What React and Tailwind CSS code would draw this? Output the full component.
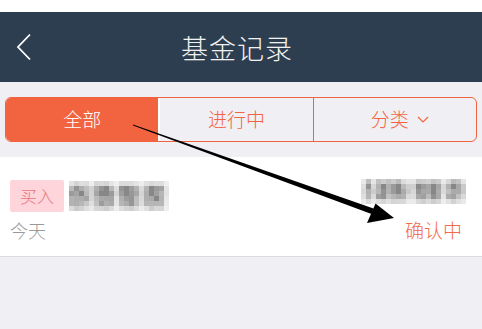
import React from 'react';

// censored-text mosaic: per column strength, per row strength
const nameCols = [0.55, 0.8, 0.75, 0.6, 0.25, 0.7, 0.85, 0.8, 0.6, 0.2, 0.65, 0.75, 0.85, 0.55, 0.2, 0.6, 0.8, 0.85, 0.6, 0.15];
const nameRows = [0.25, 0.85, 0.95, 0.8, 0.7, 0.3];
const amountCols = [0.2, 0.75, 0.3, 0.7, 0.8, 0.65, 0.75, 0.8, 0.55, 0.3, 0.25, 0.7, 0.8, 0.6, 0.75, 0.7, 0.2, 0.6, 0.8, 0.65, 0.3];
const amountRows = [0.45, 0.9, 0.85, 0.75, 0.3];

function noise(i, j) {
  const s = Math.sin(i * 12.9898 + j * 78.233) * 43758.5453;
  return s - Math.floor(s);
}

function Mosaic({ cols, rows, block = 5 }) {
  return (
    <svg width={cols.length * block} height={rows.length * block} className="block">
      {rows.map((rv, r) =>
        cols.map((cv, c) => {
          const v = Math.min(1, cv * rv * (0.75 + 0.55 * noise(r + 1, c + 3)) * 1.25);
          const g = Math.round(245 - 110 * v);
          return (
            <rect
              key={r + '-' + c}
              x={c * block}
              y={r * block}
              width={block}
              height={block}
              fill={`rgb(${g},${g},${g})`}
            />
          );
        })
      )}
    </svg>
  );
}

export default function App() {
  return (
    <div
      className="relative w-[482px] h-[329px] overflow-hidden bg-[#efeff4]"
      style={{ fontFamily: '"Noto Sans CJK SC", "Noto Sans", sans-serif' }}
    >
      <div className="h-[12px] bg-white" />

      {/* Header */}
      <div className="relative flex items-center justify-center h-[70px] bg-[#2d3e50]">
        <svg className="absolute left-[15px] top-[21px]" width="18" height="28" viewBox="0 0 18 28">
          <path d="M15 1.5 L3 14 L15 26.5" fill="none" stroke="#fff" strokeWidth="1.8" />
        </svg>
        <h1 className="text-[27px] font-light text-[#f2f2f2] tracking-[1px] -ml-[8px] leading-none">基金记录</h1>
      </div>

      {/* Tabs */}
      <div className="px-[5px] pt-[15px]">
        <div className="flex h-[45px] rounded-[6px] border border-[#f26440] overflow-hidden">
          <div className="flex-1 flex items-center justify-center bg-[#f26440] text-white text-[19px] font-light">
            全部
          </div>
          <div className="flex-1 flex items-center justify-center text-[#f26440] text-[19px] font-light border-r border-[#f26440] border-l-2 border-l-white">
            进行中
          </div>
          <div className="flex-1 flex items-center justify-center gap-[8px] text-[#f26440] text-[19px] font-light pl-[10px]">
            <span>分类</span>
            <svg width="12" height="8" viewBox="0 0 12 8">
              <path d="M1 1 L6 6 L11 1" fill="none" stroke="#f26440" strokeWidth="1.2" />
            </svg>
          </div>
        </div>
      </div>

      {/* Record card */}
      <div className="mt-[15px] bg-white border-b border-[#dcdce0] h-[100px] pl-[10px] pr-[16px] pt-[23px]">
        <div className="flex items-start justify-between">
          <div className="flex items-center gap-[5px]">
            <span className="flex items-center justify-center w-[54px] h-[32px] rounded-[2px] bg-[#fdd5da] text-[#e9747d] text-[17px] font-light">
              买入
            </span>
            <Mosaic cols={nameCols} rows={nameRows} />
          </div>
          <div className="-mt-[1px]">
            <Mosaic cols={amountCols} rows={amountRows} />
          </div>
        </div>
        <div className="flex items-center justify-between mt-[4px]">
          <span className="text-[18px] font-light text-[#999999]">今天</span>
          <span className="text-[19px] font-light text-[#f26a4b] mr-[4px]">确认中</span>
        </div>
      </div>

      {/* Annotation arrow */}
      <svg className="absolute left-0 top-0 pointer-events-none" width="482" height="329">
        <polygon points="133,124.4 133,125.6 371.5,214 373.5,208.5" fill="#000" />
        <polygon points="367,223 375.5,203.5 394,218" fill="#000" />
      </svg>
    </div>
  );
}
